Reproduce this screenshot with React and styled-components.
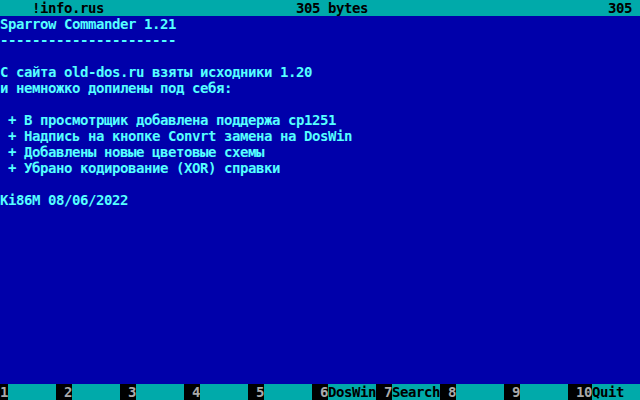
import React from 'react';
import styled, { createGlobalStyle } from 'styled-components';

const lines = [
  'Sparrow Commander 1.21',
  '----------------------',
  '',
  'С сайта old-dos.ru взяты исходники 1.20',
  'и немножко допилены под себя:',
  '',
  ' + В просмотрщик добавлена поддержа cp1251',
  ' + Надпись на кнопке Convrt замена на DosWin',
  ' + Добавлены новые цветовые схемы',
  ' + Убрано кодирование (XOR) справки',
  '',
  'Ki86M 08/06/2022',
];

const keys = [
  { num: '1', label: '' },
  { num: ' 2', label: '' },
  { num: ' 3', label: '' },
  { num: ' 4', label: '' },
  { num: ' 5', label: '' },
  { num: ' 6', label: 'DosWin' },
  { num: ' 7', label: 'Search' },
  { num: ' 8', label: '' },
  { num: ' 9', label: '' },
  { num: ' 10', label: 'Quit' },
];

function App() {
  return (
    <>
      <GlobalStyle />
      <Screen>
        <TopBar>
          <FileName>!info.rus</FileName>
          <Size>305 bytes</Size>
          <Count>305</Count>
        </TopBar>
        <Content>
          {lines.map((line, i) => (
            <Line key={i}>{line}</Line>
          ))}
        </Content>
        <KeyBar>
          {keys.map((k) => (
            <React.Fragment key={k.num}>
              <Num>{k.num}</Num>
              <Label>{k.label}</Label>
            </React.Fragment>
          ))}
        </KeyBar>
      </Screen>
    </>
  );
}

export default App;

const GlobalStyle = createGlobalStyle`
  html, body {
    margin: 0;
    padding: 0;
    background: #0000aa;
  }
`;

const Screen = styled.div`
  width: 640px;
  height: 400px;
  display: flex;
  flex-direction: column;
  background: #0000aa;
  color: #55ffff;
  font-family: "DejaVu Sans Mono", "Liberation Mono", monospace;
  font-weight: bold;
  font-size: 14px;
  letter-spacing: -0.43px;
  line-height: 16px;
  white-space: pre;
  overflow: hidden;
`;

const TopBar = styled.div`
  display: flex;
  height: 16px;
  background: #00aaaa;
  color: #000;
`;

const FileName = styled.div`
  flex: 0 0 296px;
  box-sizing: border-box;
  padding-left: 32px;
`;

const Size = styled.div`
  flex: 1;
`;

const Count = styled.div`
  padding-right: 8px;
`;

const Content = styled.div`
  flex: 1;
`;

const Line = styled.div`
  height: 16px;
`;

const KeyBar = styled.div`
  display: flex;
  height: 16px;
`;

const Num = styled.div`
  background: #000;
  color: #aaaaaa;
`;

const Label = styled.div`
  width: 48px;
  background: #00aaaa;
  color: #000;
`;
